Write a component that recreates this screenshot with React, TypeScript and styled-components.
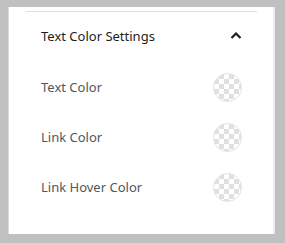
import React from 'react';
import styled, { createGlobalStyle } from 'styled-components';

const GlobalStyle = createGlobalStyle`
  html, body {
    margin: 0;
    padding: 0;
    background: #c0c0c0;
  }
  body {
    font-family: 'Noto Sans', 'Open Sans', sans-serif;
  }
`;

const Panel = styled.div`
  box-sizing: border-box;
  margin: 7px 0 0 8px;
  width: 267px;
  height: 227px;
  background: #fff;
  border-left: 1px solid #dcdcdc;
  border-right: 2px solid #ececec;
  padding: 4px 16px 0 17px;
`;

const Section = styled.div`
  border-top: 1px solid #e0e0e0;
`;

const Header = styled.div`
  display: flex;
  align-items: center;
  justify-content: space-between;
  height: 48px;
  padding: 0 15px 0 15px;
`;

const Title = styled.span`
  font-size: 13px;
  color: #1e1e1e;
`;

const Chevron = styled.svg`
  width: 12px;
  height: 8px;
  display: block;
  margin-bottom: 3px;
`;

const List = styled.div`
  margin-top: 2px;
  padding: 0 15px;
`;

const Row = styled.div`
  display: flex;
  align-items: center;
  justify-content: space-between;
  height: 50px;
`;

const Label = styled.span`
  font-size: 13px;
  color: #50575e;
`;

const Swatch = styled.span`
  box-sizing: border-box;
  width: 29px;
  height: 29px;
  border-radius: 50%;
  border: 1px solid #e2e2e2;
  background-color: #fff;
  background-image:
    linear-gradient(45deg, #e0e0e0 25%, transparent 25%, transparent 75%, #e0e0e0 75%),
    linear-gradient(45deg, #e0e0e0 25%, transparent 25%, transparent 75%, #e0e0e0 75%);
  background-size: 10px 10px;
  background-position: 0 0, 5px 5px;
`;

const colorSettings = ['Text Color', 'Link Color', 'Link Hover Color'];

const App = () => {
  return (
    <>
      <GlobalStyle />
      <Panel>
        <Section>
          <Header>
            <Title>Text Color Settings</Title>
            <Chevron viewBox="0 0 12 8" fill="none">
              <path d="M1.5 7 L6 2.5 L10.5 7" stroke="#1e1e1e" strokeWidth="2.2" />
            </Chevron>
          </Header>
          <List>
            {colorSettings.map((label) => (
              <Row key={label}>
                <Label>{label}</Label>
                <Swatch />
              </Row>
            ))}
          </List>
        </Section>
      </Panel>
    </>
  );
};

export default App;
